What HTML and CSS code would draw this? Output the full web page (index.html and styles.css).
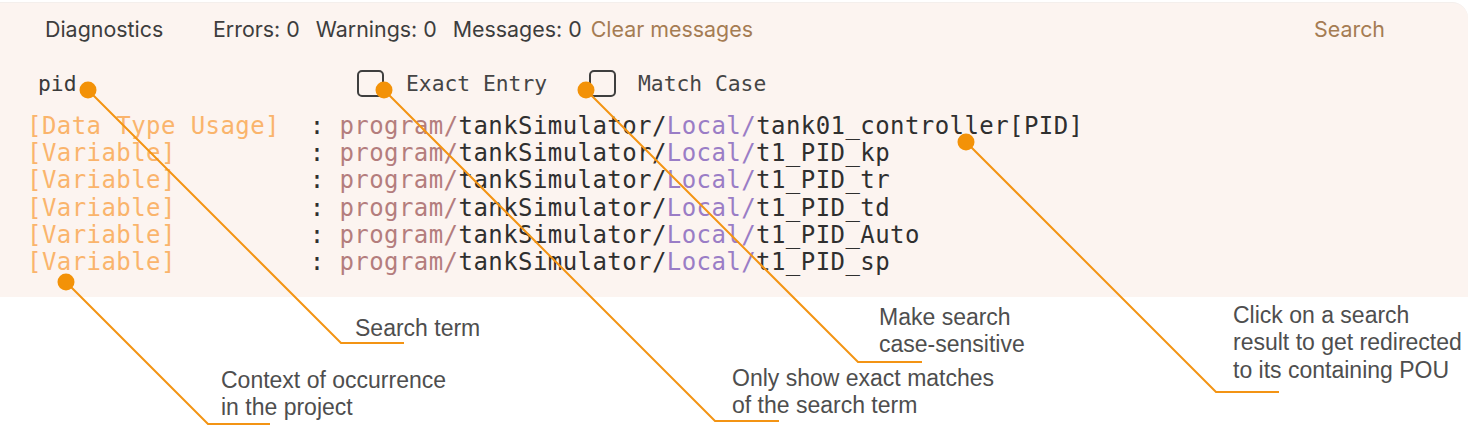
FILE: index.html
```html
<!DOCTYPE html>
<html lang="en">
<head>
<meta charset="utf-8">
<title>Search panel</title>
<link rel="stylesheet" href="styles.css">
</head>
<body>
<div class="page">
  <section class="panel">
    <header class="tabs">
      <span class="tab">Diagnostics</span>
      <span class="stats">
        <span class="stat">Errors: 0</span>
        <span class="stat">Warnings: 0</span>
        <span class="stat">Messages: 0</span>
        <span class="link">Clear messages</span>
      </span>
      <span class="link search-tab">Search</span>
    </header>
    <div class="controls">
      <span class="term">pid</span>
      <label class="check"><span class="box"></span><span class="label">Exact Entry</span></label>
      <label class="check"><span class="box"></span><span class="label">Match Case</span></label>
    </div>
    <div class="results">
      <div class="row"><span class="ctx">[Data Type Usage]</span>  : <span class="prog">program/</span>tankSimulator/<span class="loc">Local/</span>tank01_controller[PID]</div>
      <div class="row"><span class="ctx">[Variable]</span>         : <span class="prog">program/</span>tankSimulator/<span class="loc">Local/</span>t1_PID_kp</div>
      <div class="row"><span class="ctx">[Variable]</span>         : <span class="prog">program/</span>tankSimulator/<span class="loc">Local/</span>t1_PID_tr</div>
      <div class="row"><span class="ctx">[Variable]</span>         : <span class="prog">program/</span>tankSimulator/<span class="loc">Local/</span>t1_PID_td</div>
      <div class="row"><span class="ctx">[Variable]</span>         : <span class="prog">program/</span>tankSimulator/<span class="loc">Local/</span>t1_PID_Auto</div>
      <div class="row"><span class="ctx">[Variable]</span>         : <span class="prog">program/</span>tankSimulator/<span class="loc">Local/</span>t1_PID_sp</div>
    </div>
  </section>

  <svg class="callouts" width="1468" height="437" viewBox="0 0 1468 437">
    <g fill="none" stroke="#f39414" stroke-width="2">
      <polyline points="88,90 341,343 404,343"/>
      <polyline points="384,90 715,421 779,421"/>
      <polyline points="586,90 858,362 922,362"/>
      <polyline points="966,142 1216,392 1279,392"/>
      <polyline points="66,282 208,424 270,424"/>
    </g>
    <g fill="#f39208">
      <circle cx="88" cy="90" r="8.5"/>
      <circle cx="384" cy="90" r="8.5"/>
      <circle cx="586" cy="90" r="8.5"/>
      <circle cx="966" cy="142" r="8.5"/>
      <circle cx="66" cy="282" r="8.5"/>
    </g>
  </svg>

  <p class="note note-term">Search term</p>
  <p class="note note-ctx">Context of occurrence<br>in the project</p>
  <p class="note note-case">Make search<br>case-sensitive</p>
  <p class="note note-exact">Only show exact matches<br>of the search term</p>
  <p class="note note-click">Click on a search<br>result to get redirected<br>to its containing POU</p>
</div>
</body>
</html>
```
FILE: styles.css
```css
html, body {
  margin: 0;
  padding: 0;
  background: #ffffff;
}

.page {
  position: relative;
  width: 1468px;
  height: 437px;
  overflow: hidden;
}

.panel {
  margin-top: 2px;
  height: 295px;
  background: #fcf4f0;
  border-top: 1px solid #f4efec;
  border-radius: 0 16px 0 0;
  box-sizing: border-box;
}

.tabs {
  display: flex;
  align-items: center;
  height: 52px;
  padding: 0 83px 0 45px;
  font-family: Inter, "Noto Sans", sans-serif;
  font-size: 21.4px;
  color: #3d3d3d;
}

.tab {
  width: 168px;
}

.stats {
  display: flex;
  gap: 16px;
}

.stats .link {
  margin-left: -7px;
}

.link {
  color: #a57c53;
}

.search-tab {
  margin-left: auto;
}

.controls {
  display: flex;
  align-items: center;
  height: 56px;
  padding-left: 38px;
  font-family: "DejaVu Sans Mono", monospace;
  font-size: 21.3px;
  color: #3a3a3a;
}

.term {
  width: 319px;
}

.check {
  display: flex;
  align-items: center;
  gap: 22px;
  margin-right: 42px;
}

.box {
  width: 23px;
  height: 23px;
  border: 2px solid #3f3f3f;
  border-radius: 5px;
}

.label {
  color: #454545;
}

.results {
  padding: 2px 0 0 27px;
  font-family: "DejaVu Sans Mono", monospace;
  font-size: 24px;
  letter-spacing: 0.43px;
  line-height: 27.2px;
  color: #2f2f2f;
}

.row {
  white-space: pre;
}

.ctx {
  color: #fab46c;
}

.prog {
  color: #b47d7d;
}

.loc {
  color: #9a7dc6;
}

.callouts {
  position: absolute;
  left: 0;
  top: 0;
}

.note {
  position: absolute;
  margin: 0;
  font-family: "Liberation Sans", Arial, sans-serif;
  font-size: 23px;
  line-height: 27.3px;
  color: #4e4e4e;
  white-space: nowrap;
}

.note-term { left: 355px; top: 315px; }
.note-ctx { left: 221px; top: 367px; }
.note-case { left: 879px; top: 304px; }
.note-exact { left: 732px; top: 365px; }
.note-click { left: 1233px; top: 302px; }
```
